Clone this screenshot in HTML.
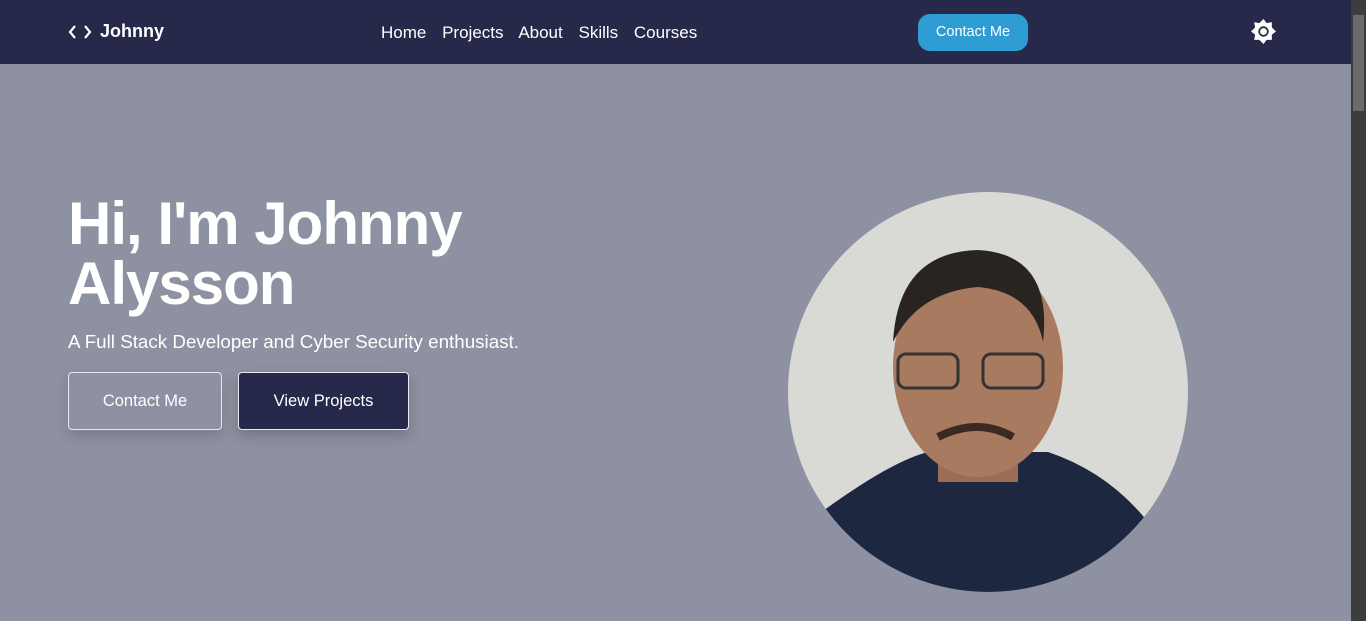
<!DOCTYPE html>
<html><head><meta charset="utf-8"><style>
*{margin:0;padding:0;box-sizing:border-box}
body{width:1366px;height:621px;overflow:hidden;background:#8e91a1;font-family:"Liberation Sans",sans-serif;position:relative}
.nav{position:absolute;left:0;top:0;width:1351px;height:64px;background:#26294a;color:#fff}
.logo{position:absolute;left:100px;top:21px;font-weight:bold;font-size:18px}
.links{position:absolute;left:381px;top:23px;font-size:17px;word-spacing:0}
.links span{margin-right:11px}
.cbtn{position:absolute;left:918px;top:14px;width:110px;height:37px;border-radius:12px;background:#2e9dd3;font-size:14.5px;text-align:center;line-height:37px}
.sb{position:absolute;right:0;top:0;width:15px;height:621px;background:#3d3d3d}
.sb .th{position:absolute;left:2px;top:15px;width:11px;height:96px;background:#6b6b6b}
h1{position:absolute;left:68px;top:194px;color:#fff;font-size:60px;line-height:60px;font-weight:bold;letter-spacing:-1px}
.sub{position:absolute;left:68px;top:331px;color:#fff;font-size:18.8px}
.b1{position:absolute;left:68px;top:372px;width:154px;height:58px;border:1px solid #e8e8ee;border-radius:4px;color:#fff;font-size:16.5px;text-align:center;line-height:56px;box-shadow:0 6px 14px rgba(0,0,0,.15)}
.b2{position:absolute;left:238px;top:372px;width:171px;height:58px;border:1px solid #e8e8ee;border-radius:4px;background:#26294a;color:#fff;font-size:16.5px;text-align:center;line-height:56px;box-shadow:0 6px 14px rgba(0,0,0,.2)}
</style></head><body>
<div class="nav">
<svg style="position:absolute;left:68px;top:24px" width="24" height="16" viewBox="0 0 24 16"><path d="M7 2 L2 8 L7 14 M17 2 L22 8 L17 14" stroke="#fff" stroke-width="2.2" fill="none"/></svg>
<div class="logo">Johnny</div>
<div class="links"><span>Home</span> <span>Projects</span> <span>About</span> <span>Skills</span> <span>Courses</span></div>
<div class="cbtn">Contact Me</div>
<svg style="position:absolute;left:1251px;top:19px" width="25" height="25" viewBox="0 0 24 24"><polygon fill="#fff" points="12,0 15,4 20,3 20,8 24,12 20,15 20,20 15,20 12,24 8,20 3,20 4,15 0,12 4,8 3,3 8,4"/><circle cx="12" cy="12" r="5" fill="#26294a"/><circle cx="12" cy="12" r="3.3" fill="#fff"/></svg>
</div>
<div class="sb"><div class="th"></div></div>
<h1>Hi, I'm Johnny<br>Alysson</h1>
<div class="sub">A Full Stack Developer and Cyber Security enthusiast.</div>
<div class="b1">Contact Me</div>
<div class="b2">View Projects</div>
<svg style="position:absolute;left:788px;top:192px" width="400" height="400" viewBox="0 0 400 400">
<defs><clipPath id="c"><circle cx="200" cy="200" r="200"/></clipPath></defs>
<g clip-path="url(#c)">
<rect width="400" height="400" fill="#d9dad6"/>
<path d="M20 330 Q100 270 140 260 L260 260 Q320 280 360 330 L400 400 L0 400Z" fill="#1e2740"/>
<rect x="150" y="220" width="80" height="70" fill="#9a6e55"/>
<ellipse cx="190" cy="175" rx="85" ry="110" fill="#a87a60"/>
<path d="M105 150 Q110 60 190 58 Q265 62 255 150 Q245 100 190 95 Q130 100 105 150Z" fill="#2a2420"/>
<path d="M150 245 Q190 225 225 245" stroke="#3a2a22" stroke-width="8" fill="none"/>
<rect x="110" y="162" width="60" height="34" rx="8" fill="none" stroke="#333" stroke-width="3"/>
<rect x="195" y="162" width="60" height="34" rx="8" fill="none" stroke="#333" stroke-width="3"/>
</g></svg>
</body></html>
